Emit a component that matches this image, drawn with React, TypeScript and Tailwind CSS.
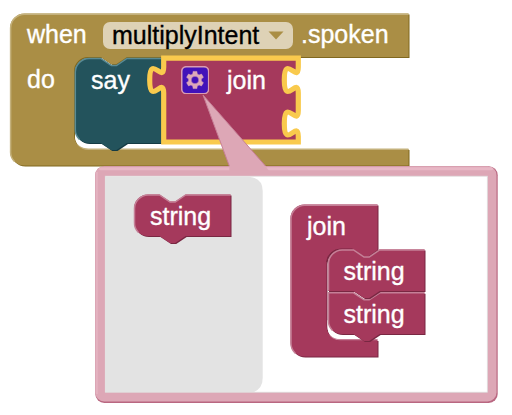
import type { ReactNode } from "react";

type ShapeProps = { d: string; fill: string; dark: string; light: string; edge: string };

// A bevelled block: shadow edge to the lower right, body, highlight on the upper left.
function Shape({ d, fill, dark, light, edge }: ShapeProps) {
  return (
    <g>
      <path d={d} fill={dark} transform="translate(1 1)" />
      <path d={d} fill={fill} />
      <path d={edge} fill="none" stroke={light} strokeWidth="1.5" strokeLinecap="round" />
    </g>
  );
}

// The outline behind a block's content; it may spill past the box for tabs.
function Outline({ viewBox, children }: { viewBox: string; children: ReactNode }) {
  return (
    <svg className="absolute inset-0 size-full overflow-visible" viewBox={viewBox}>
      {children}
    </svg>
  );
}

function Label({ children }: { children: ReactNode }) {
  return <span className="relative whitespace-pre text-[25px] leading-7 [-webkit-text-stroke:0.35px_currentColor]">{children}</span>;
}

const olive = { fill: "#aa8e45", dark: "#80681f", light: "#c4b17c" };
const teal = { fill: "#23535c", dark: "#143b44", light: "#5a8b94" };
const berry = { fill: "#a5395c", dark: "#792742", light: "#c58097" };

function gearPath() {
  const points: string[] = [];
  for (let i = 0; i < 6; i++) {
    const center = (i * Math.PI) / 3 + Math.PI / 2;
    for (const [offset, radius] of [[-0.36, 6.4], [-0.22, 8.8], [0.22, 8.8], [0.36, 6.4]]) {
      points.push(`${(14 + Math.cos(center + offset) * radius).toFixed(2)} ${(14 + Math.sin(center + offset) * radius).toFixed(2)}`);
    }
  }
  return `M${points.join("L")}Z M17.8 14a3.8 3.8 0 1 0-7.6 0a3.8 3.8 0 1 0 7.6 0Z`;
}

function Gear() {
  return (
    <svg className="relative size-7" viewBox="0 0 28 28">
      <rect x=".7" y=".7" width="27" height="27" rx="4.8" fill="#4212b9" stroke="#d99bb1" strokeWidth="1.6" />
      <path d={gearPath()} fill="#dda8b8" fillRule="evenodd" stroke="#dda8b8" strokeWidth=".5" strokeLinejoin="round" />
    </svg>
  );
}

function StringBlock({ stacked = false }: { stacked?: boolean }) {
  return (
    <div className="relative flex h-[43px] w-[97px] pt-2 pl-4">
      <Outline viewBox="0 0 97 43">
        <Shape
          {...berry}
          d={
            stacked
              ? "M14 .5H25.5l10.5 7h5.2l10.5-7H96.5V42H51.7l-10.5 7H36l-10.5-7H0V14.5A14 14 0 0 1 14 .5Z"
              : "M14 .5H25.5l10.5 7h5.2l10.5-7H96.5V42H51.7l-10.5 7H36l-10.5-7H14A14 14 0 0 1 0 28V14.5A14 14 0 0 1 14 .5Z"
          }
          edge={
            stacked
              ? "M.5 41V14.5A14 14 0 0 1 14 1H25.5l10.5 7h5.2l10.5-7H96"
              : "M4 38A14 14 0 0 1 .5 28V14.5A14 14 0 0 1 14 1H25.5l10.5 7h5.2l10.5-7H96"
          }
        />
      </Outline>
      <Label>string</Label>
    </div>
  );
}

function LastStringBlock() {
  return (
    <div className="relative flex h-[43px] w-[97px] pt-2 pl-4">
      <Outline viewBox="0 0 97 43">
        <Shape
          {...berry}
          d="M0 .8H25.5l10.5 7h5.2l10.5-7H96.5V42H51.7l-10.5 7H36l-10.5-7H14A14 14 0 0 1 0 28Z"
          edge="M4 38A14 14 0 0 1 .5 28V.8H25.5l10.5 7h5.2l10.5-7H96"
        />
      </Outline>
      <Label>string</Label>
    </div>
  );
}

function SayBlock() {
  return (
    <div className="relative flex h-[86px] w-[88px] pt-2 pl-4">
      <Outline viewBox="75 58 88 86">
        <Shape
          {...teal}
          d="M89 58H100.8l10.5 7h5.2l10.5-7H163V143H127l-10.5 7h-5.2l-10.5-7H89A14 14 0 0 1 75 129V72A14 14 0 0 1 89 58Z"
          edge="M79 139A14 14 0 0 1 75.3 129V72A14 14 0 0 1 89 58.5H100.8l10.5 7h5.2l10.5-7H161"
        />
      </Outline>
      <Label>say</Label>
    </div>
  );
}

function JoinBlock() {
  return (
    <div className="relative flex h-[84px] w-[136px] items-start gap-[18px] pt-2 pl-[18px]">
      <Outline viewBox="163 58 136 84">
        <path
          d="M163.7 58.2H298.3V67c0 17.5-14-14-14 13s14-4.4 14 13V110.5c0 17.5-14-14-14 13s14-4.4 14 13V142H163.7V93c0-17.4-14 14-14-13s14 4.4 14-13Z"
          fill="#a5395c"
          stroke="#f9ca4d"
          strokeWidth="5.2"
        />
      </Outline>
      <Gear />
      <Label>join</Label>
    </div>
  );
}

function EventBlock() {
  return (
    <section className="absolute top-[13px] left-[10px] h-[153px] w-[400px]">
      <Outline viewBox="10 13 400 153">
        <Shape
          {...olive}
          d="M24.5 13.5H408.5V57H127l-10.5 7h-5.2l-10.5-7H88.5A14 14 0 0 0 74 71V134.5A14 14 0 0 0 88.5 149H408.5V165.5H24.5A14.5 14.5 0 0 1 10 151V28A14.5 14.5 0 0 1 24.5 13.5Z"
          edge="M14 161A14 14 0 0 1 10.6 151V28A14 14 0 0 1 24.5 14.2H408M78 144.5A14 14 0 0 0 88.5 149.3H408"
        />
        <path d="M75 125V135Q75 148 88 148H164V140H90Z" fill="white" />
      </Outline>
      <header className="flex h-11 items-center pl-[17px]">
        <div className="w-[76px]">
          <Label>when</Label>
        </div>
        <button className="relative flex h-[27px] w-[190px] items-center justify-between rounded-[7px] bg-[#ded2b6] pr-[9px] pl-[9px] text-black">
          <Label>multiplyIntent</Label>
          <svg className="size-4" viewBox="0 0 16 16">
            <path d="M.5 4.5H15.5L8 12.5Z" fill="#aa8e45" />
          </svg>
        </button>
        <div className="pl-2">
          <Label>.spoken</Label>
        </div>
      </header>
      <div className="flex items-start pt-px pl-[17px]">
        <div className="flex w-12 pt-[7px]">
          <Label>do</Label>
        </div>
        <SayBlock />
        <JoinBlock />
      </div>
    </section>
  );
}

function JoinContainer() {
  return (
    <div className="relative flex h-[153px] w-[88px] flex-col pt-2">
      <Outline viewBox="290 204 88 153">
        <Shape
          {...berry}
          d="M304.5 204.5H377.5V250l-9.3 6.5h-5.2l-10.5-7H340.5A14 14 0 0 0 326.5 263V326A14 14 0 0 0 340.5 340H377.5V356.5H304.5A14 14 0 0 1 290.5 342.5V218.5A14 14 0 0 1 304.5 204.5Z"
          edge="M295 353A14 14 0 0 1 291 342.5V218.5A14 14 0 0 1 304.5 205.2H377M330.5 335.5A14 14 0 0 0 340.5 339.6H377"
        />
        <path d="M327.5 320V326Q327.5 339 341 339H377V332H340Z" fill="white" />
        <path d="M326.6 262A14 14 0 0 1 340.5 249H352.5" fill="none" stroke="#792742" />
      </Outline>
      <div className="flex h-[37px] pl-[17px]">
        <Label>join</Label>
      </div>
      <div className="relative flex flex-col-reverse pl-[37.5px]">
        <LastStringBlock />
        <StringBlock stacked />
      </div>
    </div>
  );
}

function MutatorBubble() {
  return (
    <section className="absolute top-[166px] left-[95px] flex h-[237px] w-[403px] p-2.5">
      <Outline viewBox="95 166 403 237">
        <rect x="95.3" y="166.2" width="402.4" height="236.8" rx="9" fill="#b96781" />
        <rect x="95.2" y="166.2" width="401.3" height="235.2" rx="9" fill="#dda7b6" />
        <rect x="99" y="167.2" width="394" height="3" rx="1.5" fill="#e8b7c5" />
        <rect x="95.8" y="172" width="2" height="222" fill="#e4b2c0" />
        <path d="M203 95L229.3 166V171H269L265.5 166Z" fill="#dda7b6" />
        <path d="M203 95L229.3 166M203 95L265.5 166" fill="none" stroke="#c77f96" />
        <rect x="105.3" y="176.2" width="382" height="216" fill="white" stroke="#dedede" strokeWidth=".8" />
        <path d="M105.5 176.7H249Q262.7 178 262.7 191V378Q262.7 388 254 392H105.5Z" fill="#e3e3e3" />
      </Outline>
      <div className="w-[158px] pt-[18px] pl-[29px]">
        <StringBlock />
      </div>
      <div className="pt-7 pl-[27px]">
        <JoinContainer />
      </div>
    </section>
  );
}

export default function App() {
  return (
    <main className="relative h-[415px] w-[512px] overflow-hidden bg-white font-['Liberation_Sans',Arial,sans-serif] text-white">
      <EventBlock />
      <MutatorBubble />
    </main>
  );
}
